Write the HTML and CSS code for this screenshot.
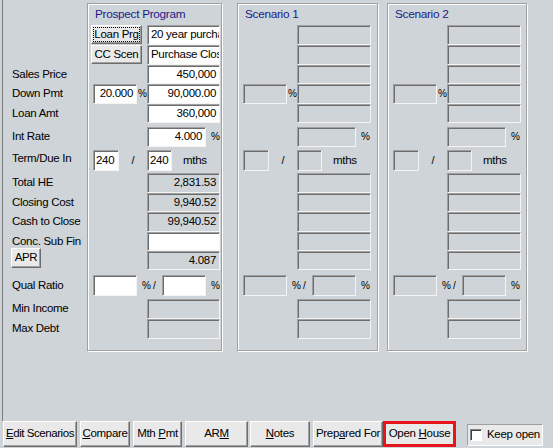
FILE: index.html
```html
<!DOCTYPE html>
<html>
<head>
<meta charset="utf-8">
<title>Prospect Program</title>
<link rel="stylesheet" href="styles.css">
</head>
<body>
<div class="dlg">
  <div class="main">
    <div class="labels">
      <div class="row"></div>
      <div class="row"></div>
      <div class="row h19"><span class="lbl">Sales Price</span></div>
      <div class="row"><span class="lbl">Down Pmt</span></div>
      <div class="row h19"><span class="lbl">Loan Amt</span></div>
      <div class="row mt4"><span class="lbl">Int Rate</span></div>
      <div class="row h21 mt3"><span class="lbl up">Term/Due In</span></div>
      <div class="row mt2"><span class="lbl">Total HE</span></div>
      <div class="row h19"><span class="lbl">Closing Cost</span></div>
      <div class="row"><span class="lbl">Cash to Close</span></div>
      <div class="row h19"><span class="lbl">Conc. Sub Fin</span></div>
      <div class="row h19"><button class="btn apr">APR</button></div>
      <div class="row h21 mt5"><span class="lbl">Qual Ratio</span></div>
      <div class="row mt3"><span class="lbl">Min Income</span></div>
      <div class="row"><span class="lbl">Max Debt</span></div>
    </div>

    <section class="panel p1">
      <div class="head">Prospect Program</div>
      <div class="row"><button class="btn blp"><span class="focus">Loan Prg</span></button><div class="fld w fm tl">20 year purcha</div></div>
      <div class="row"><button class="btn blp">CC Scen</button><div class="fld w fm tl">Purchase Clos</div></div>
      <div class="row h19"><div class="fld w fm">450,000</div></div>
      <div class="row"><div class="fld w fs">20.000</div><span class="pct1">%</span><div class="fld w fm">90,000.00</div></div>
      <div class="row h19"><div class="fld w fm">360,000</div></div>
      <div class="row mt4"><div class="fld w fi">4.000</div><span class="pct2">%</span></div>
      <div class="row h21 mt3"><div class="fld w t1 tl">240</div><span class="slash">/</span><div class="fld w t2 tl">240</div><span class="mths">mths</span></div>
      <div class="row mt2"><div class="fld fm">2,831.53</div></div>
      <div class="row h19"><div class="fld fm">9,940.52</div></div>
      <div class="row"><div class="fld fm">99,940.52</div></div>
      <div class="row h19"><div class="fld w fm"></div></div>
      <div class="row h19"><div class="fld fm">4.087</div></div>
      <div class="row h21 mt5"><div class="fld w fs"></div><span class="sep">% /</span><div class="fld w fs2"></div><span class="pct2">%</span></div>
      <div class="row mt3"><div class="fld fm"></div></div>
      <div class="row"><div class="fld fm"></div></div>
    </section>

    <section class="panel p2">
      <div class="head">Scenario 1</div>
      <div class="row"><div class="fld fm"></div></div>
      <div class="row"><div class="fld fm"></div></div>
      <div class="row h19"><div class="fld fm"></div></div>
      <div class="row"><div class="fld fs"></div><span class="pct1">%</span><div class="fld fm"></div></div>
      <div class="row h19"><div class="fld fm"></div></div>
      <div class="row mt4"><div class="fld fi"></div><span class="pct2">%</span></div>
      <div class="row h21 mt3"><div class="fld t1"></div><span class="slash">/</span><div class="fld t2"></div><span class="mths">mths</span></div>
      <div class="row mt2"><div class="fld fm"></div></div>
      <div class="row h19"><div class="fld fm"></div></div>
      <div class="row"><div class="fld fm"></div></div>
      <div class="row h19"><div class="fld fm"></div></div>
      <div class="row h19"><div class="fld fm"></div></div>
      <div class="row h21 mt5"><div class="fld fs"></div><span class="sep">% /</span><div class="fld fs2"></div><span class="pct2">%</span></div>
      <div class="row mt3"><div class="fld fm"></div></div>
      <div class="row"><div class="fld fm"></div></div>
    </section>

    <section class="panel p3">
      <div class="head">Scenario 2</div>
      <div class="row"><div class="fld fm"></div></div>
      <div class="row"><div class="fld fm"></div></div>
      <div class="row h19"><div class="fld fm"></div></div>
      <div class="row"><div class="fld fs"></div><span class="pct1">%</span><div class="fld fm"></div></div>
      <div class="row h19"><div class="fld fm"></div></div>
      <div class="row mt4"><div class="fld fi"></div><span class="pct2">%</span></div>
      <div class="row h21 mt3"><div class="fld t1"></div><span class="slash">/</span><div class="fld t2"></div><span class="mths">mths</span></div>
      <div class="row mt2"><div class="fld fm"></div></div>
      <div class="row h19"><div class="fld fm"></div></div>
      <div class="row"><div class="fld fm"></div></div>
      <div class="row h19"><div class="fld fm"></div></div>
      <div class="row h19"><div class="fld fm"></div></div>
      <div class="row h21 mt5"><div class="fld fs"></div><span class="sep">% /</span><div class="fld fs2"></div><span class="pct2">%</span></div>
      <div class="row mt3"><div class="fld fm"></div></div>
      <div class="row"><div class="fld fm"></div></div>
    </section>
  </div>

  <div class="bar">
    <button class="btn bb b-edit"><span><u>E</u>dit Scenarios</span></button>
    <button class="btn bb b-cmp"><span><u>C</u>ompare</span></button>
    <button class="btn bb b-mth"><span>Mth <u>P</u>mt</span></button>
    <button class="btn bb b-arm"><span>AR<u>M</u></span></button>
    <button class="btn bb b-notes"><span><u>N</u>otes</span></button>
    <button class="btn bb b-prep"><span>Prep<u>a</u>red For</span></button>
    <button class="btn bb b-open"><span>Open <u>H</u>ouse</span></button>
    <label class="keep"><span class="cb"></span><span>Keep open</span></label>
  </div>
</div>
</body>
</html>
```

FILE: styles.css
```css
* { box-sizing: border-box; }
html, body { margin: 0; padding: 0; }
body {
  width: 553px;
  height: 448px;
  overflow: hidden;
  background: #cfd4d8;
  font-family: "Liberation Sans", Arial, sans-serif;
  font-size: 11px;
  letter-spacing: -0.3px;
  line-height: 1;
  color: #000;
}
.dlg { display: flex; flex-direction: column; height: 448px; }
.main {
  height: 421px;
  margin-left: 2px;
  border-left: 1px solid #7c7c7c;
  display: flex;
  align-items: flex-start;
}
.labels { width: 84px; flex: none; padding: 25px 0 0 9px; }
.panel {
  flex: none;
  margin-top: 3px;
  border: 1px solid #a0a0a0;
  box-shadow: inset 1px 1px 0 #fff, 1px 1px 0 #fff;
  padding-bottom: 11px;
}
.p1 { width: 135px; }
.p2 { width: 141px; margin-left: 15px; }
.p3 { width: 140px; margin-left: 9px; }
.head { height: 21px; padding: 3px 0 0 7px; line-height: 14px; font-size: 11.8px; color: #1a1a8a; white-space: nowrap; }

.row { display: flex; align-items: stretch; height: 20px; }
.labels .row { align-items: center; }
.h19 { height: 19px; }
.h21 { height: 21px; }
.mt2 { margin-top: 2px; }
.mt3 { margin-top: 3px; }
.mt4 { margin-top: 4px; }
.mt5 { margin-top: 5px; }
.lbl { white-space: nowrap; font-size: 11.5px; }
.lbl.up { margin-top: -3px; }

.fld {
  flex: none;
  border: 1px solid;
  border-color: #a0a0a0 #f4f4f4 #f4f4f4 #a0a0a0;
  box-shadow: inset 1px 1px 0 #6d6d6d;
  display: flex;
  align-items: center;
  justify-content: flex-end;
  padding: 0 3px 0 3px;
  overflow: hidden;
  white-space: nowrap;
  font-size: 11.5px;
}
.w { background: #fff; }
.tl { justify-content: flex-start; }
.fm { margin-left: 59px; width: 73px; }
.p2 .fm, .p3 .fm { width: 74px; }
.btn + .fm { margin-left: 5px; }
.fs { margin-left: 5px; width: 44px; }
.pct1 { width: 10px; padding-left: 1px; display: flex; align-items: center; font-size: 10px; }
.pct1 + .fm { margin-left: 0; }
.fi { margin-left: 59px; width: 59px; }
.pct2 { margin-left: 5px; display: flex; align-items: center; font-size: 10px; }
.t1 { margin-left: 5px; width: 26px; padding-left: 2px; }
.slash { width: 28px; display: flex; align-items: center; justify-content: center; }
.t2 { width: 25px; padding-left: 2px; }
.mths { margin-left: 11px; display: flex; align-items: center; font-size: 11.5px; }
.sep { width: 25px; padding-left: 5px; display: flex; align-items: center; white-space: nowrap; font-size: 10px; }
.fs2 { width: 44px; }

.btn {
  font: inherit;
  font-size: 11.5px;
  letter-spacing: -0.3px;
  color: #000;
  background: #e9e9e9;
  border: 1px solid;
  border-color: #fff #6d6d6d #6d6d6d #fff;
  box-shadow: inset -1px -1px 0 #a0a0a0;
  padding: 0;
  margin: 0;
  display: flex;
  align-items: center;
  justify-content: center;
  white-space: nowrap;
  flex: none;
}
.blp { margin-left: 3px; width: 51px; height: 19px; }
.focus {
  flex: 1;
  align-self: stretch;
  margin: 1px;
  border: 1px dotted #000;
  display: flex;
  align-items: center;
  justify-content: center;
}
.apr { width: 30px; height: 20px; margin: -3px 0 0 -1px; align-self: flex-start; }

.bar { height: 27px; display: flex; align-items: flex-start; padding-left: 3px; }
.bb { height: 26px; margin-right: 3px; }
.b-edit { width: 74px; letter-spacing: -0.45px; }
.b-cmp { width: 50px; }
.b-mth { width: 49px; }
.b-arm { width: 63px; margin-right: 2px; }
.b-notes { width: 60px; }
.b-prep { width: 70px; margin-right: 0; }
.b-open { width: 73px; border: 3px solid #e8141c; box-shadow: none; margin-right: 11px; }
.keep {
  width: 76px;
  height: 22px;
  margin-top: 3px;
  border: 1px solid;
  border-color: #a0a0a0 #fff #fff #a0a0a0;
  background: #e9e9e9;
  display: flex;
  align-items: center;
  padding-left: 2px;
  gap: 5px;
  white-space: nowrap;
  font-size: 11.5px;
}
.cb {
  flex: none;
  width: 12px;
  height: 12px;
  background: #fff;
  border: 1px solid;
  border-color: #808080 #fff #fff #808080;
  box-shadow: inset 1px 1px 0 #404040;
}
```
